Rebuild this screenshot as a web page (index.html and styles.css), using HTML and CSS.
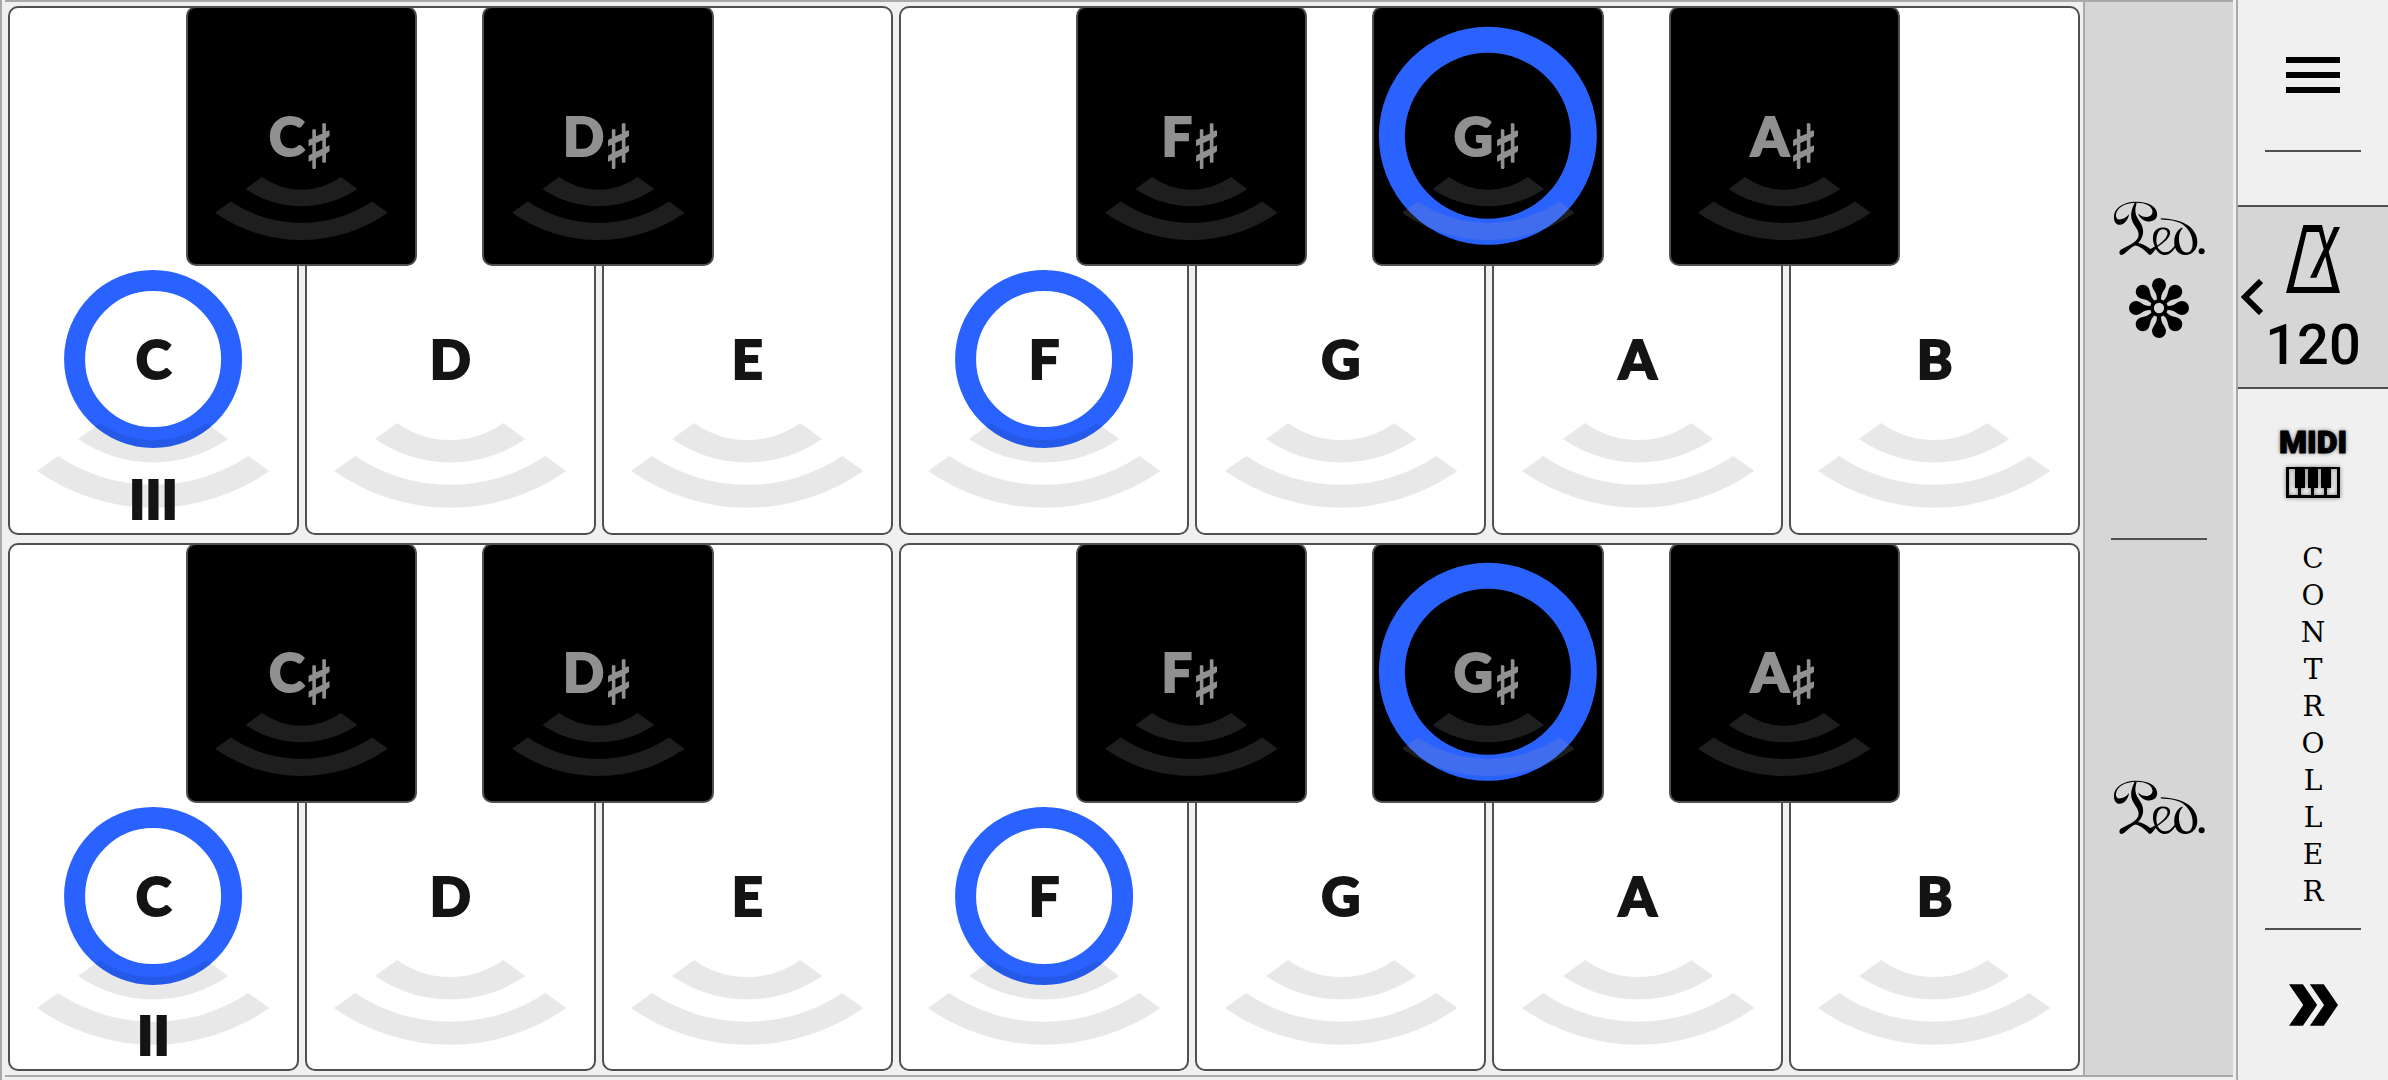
FILE: index.html
```html
<!DOCTYPE html>
<html lang="en">
<head>
<meta charset="utf-8">
<title>Keyboard Controller</title>
<link rel="stylesheet" href="styles.css">
</head>
<body>
<svg class="symbols" aria-hidden="true">
  <symbol id="waves" viewBox="-116 423 232 85">
    <path d="M-53 423A91 91 0 0 0 53 423L75 439A132 132 0 0 1 -75 439Z"/>
    <path d="M-95 456A172 172 0 0 0 95 456L116 471A202 202 0 0 1 -116 471Z"/>
  </symbol>
  <symbol id="pedal-down" viewBox="132 64 272 164">
    <path d="M177 103C176 116 165 135 149 135C137 135 132 124 132 112C132 84 161 66 199 66C236 66 261 82 261 103C261 117 251 125 238 125C222 125 208 115 204 101C213 110 224 113 234 111C243 109 248 103 247 94C245 78 225 69 199 69C163 69 140 85 138 105C137 115 142 120 150 119C162 118 172 110 177 103Z"/>
    <path d="M194 68L200 69C196 82 194 94 198 106C203 121 219 134 219 154C219 170 212 181 204 189C217 191 230 199 241 207L254 200L256 203L237 225C226 213 214 201 196 197C180 201 167 224 154 225C147 225 146 214 153 209C168 200 195 190 203 175C209 163 204 152 197 142C189 130 183 121 183 106C183 93 189 79 194 68Z"/>
    <path d="M237 222C245 214 251 206 255 201C248 188 246 170 252 157C258 146 272 141 285 144C296 146 302 154 299 164C294 180 276 192 262 201C268 211 276 218 286 217C299 216 309 204 317 192L320 195C311 210 299 225 284 225C272 225 263 217 257 207C252 213 247 220 241 225ZM261 197C275 188 291 174 292 160C292 151 282 146 273 149C260 154 256 178 261 197Z" fill-rule="evenodd"/>
    <path d="M272 115C308 117 336 123 355 138C372 151 381 168 381 187C381 209 366 225 345 225C325 225 312 209 312 186C312 166 321 150 336 143L337 146C327 155 325 171 327 188C330 206 338 219 350 218C362 217 368 204 367 187C366 164 354 147 338 134C321 123 299 120 272 119Z"/>
    <circle cx="394" cy="214" r="9"/>
  </symbol>
  <symbol id="pedal-up" viewBox="-90 -90 180 180">
    <path id="petal" d="M-7 -20C-2 -46 -21 -54 -21 -69A21 21 0 0 1 21 -69C21 -54 2 -46 7 -20Z"/>
    <use href="#petal" transform="rotate(45)"/>
    <use href="#petal" transform="rotate(90)"/>
    <use href="#petal" transform="rotate(135)"/>
    <use href="#petal" transform="rotate(180)"/>
    <use href="#petal" transform="rotate(225)"/>
    <use href="#petal" transform="rotate(270)"/>
    <use href="#petal" transform="rotate(315)"/>
    <circle r="21" fill="none" stroke="#000" stroke-width="11"/>
  </symbol>
</svg>

<div class="app">
  <main class="board">
    <div class="keyboards">
      <section class="octave" aria-label="Octave III">
        <div class="whites">
          <button class="key white"><span class="note"><i class="ring"></i>C</span><svg class="waves"><use href="#waves"/></svg><span class="number">III</span></button>
          <button class="key white"><span class="note">D</span><svg class="waves"><use href="#waves"/></svg></button>
          <button class="key white"><span class="note">E</span><svg class="waves"><use href="#waves"/></svg></button>
          <button class="key white"><span class="note"><i class="ring"></i>F</span><svg class="waves"><use href="#waves"/></svg></button>
          <button class="key white"><span class="note">G</span><svg class="waves"><use href="#waves"/></svg></button>
          <button class="key white"><span class="note">A</span><svg class="waves"><use href="#waves"/></svg></button>
          <button class="key white"><span class="note">B</span><svg class="waves"><use href="#waves"/></svg></button>
        </div>
        <div class="blacks">
          <button class="key black"><span class="note">C<span class="sharp">♯</span></span><svg class="waves"><use href="#waves"/></svg></button>
          <button class="key black"><span class="note">D<span class="sharp">♯</span></span><svg class="waves"><use href="#waves"/></svg></button>
          <button class="key black after-gap"><span class="note">F<span class="sharp">♯</span></span><svg class="waves"><use href="#waves"/></svg></button>
          <button class="key black"><span class="note"><i class="ring"></i>G<span class="sharp">♯</span></span><svg class="waves"><use href="#waves"/></svg></button>
          <button class="key black"><span class="note">A<span class="sharp">♯</span></span><svg class="waves"><use href="#waves"/></svg></button>
        </div>
      </section>
      <section class="octave" aria-label="Octave II">
        <div class="whites">
          <button class="key white"><span class="note"><i class="ring"></i>C</span><svg class="waves"><use href="#waves"/></svg><span class="number">II</span></button>
          <button class="key white"><span class="note">D</span><svg class="waves"><use href="#waves"/></svg></button>
          <button class="key white"><span class="note">E</span><svg class="waves"><use href="#waves"/></svg></button>
          <button class="key white"><span class="note"><i class="ring"></i>F</span><svg class="waves"><use href="#waves"/></svg></button>
          <button class="key white"><span class="note">G</span><svg class="waves"><use href="#waves"/></svg></button>
          <button class="key white"><span class="note">A</span><svg class="waves"><use href="#waves"/></svg></button>
          <button class="key white"><span class="note">B</span><svg class="waves"><use href="#waves"/></svg></button>
        </div>
        <div class="blacks">
          <button class="key black"><span class="note">C<span class="sharp">♯</span></span><svg class="waves"><use href="#waves"/></svg></button>
          <button class="key black"><span class="note">D<span class="sharp">♯</span></span><svg class="waves"><use href="#waves"/></svg></button>
          <button class="key black after-gap"><span class="note">F<span class="sharp">♯</span></span><svg class="waves"><use href="#waves"/></svg></button>
          <button class="key black"><span class="note"><i class="ring"></i>G<span class="sharp">♯</span></span><svg class="waves"><use href="#waves"/></svg></button>
          <button class="key black"><span class="note">A<span class="sharp">♯</span></span><svg class="waves"><use href="#waves"/></svg></button>
        </div>
      </section>
    </div>
    <div class="pedals">
      <button class="pedal" aria-label="Pedal, press and release">
        <svg class="ped"><use href="#pedal-down"/></svg>
        <svg class="release"><use href="#pedal-up"/></svg>
      </button>
      <hr class="rule">
      <button class="pedal" aria-label="Pedal">
        <svg class="ped"><use href="#pedal-down"/></svg>
      </button>
    </div>
  </main>

  <aside class="sidebar">
    <button class="menu" aria-label="Menu">
      <svg width="54" height="36" viewBox="0 0 54 36"><path d="M0 0H54V6H0ZM0 15H54V21H0ZM0 30H54V36H0Z"/></svg>
    </button>
    <hr class="rule">
    <button class="tempo" aria-label="Metronome, 120">
      <svg class="back" width="22" height="36" viewBox="0 0 22 36"><path d="M20 2L4 18L20 34" fill="none" stroke="#000" stroke-width="6"/></svg>
      <svg width="54" height="68" viewBox="0 0 162 204"><path fill-rule="evenodd" d="M52 0H108L122 58L144 6H162L128 80L162 204H0ZM62 21L23 186H138L118 94L91 158H72L113 72L99 21Z"/></svg>
      <span class="bpm">120</span>
    </button>
    <button class="midi">
      <span class="midi-name">MIDI</span>
      <svg class="midi-keys" width="54" height="31" viewBox="0 0 54 31"><path fill-rule="evenodd" d="M0 0H54V31H0ZM3 2V28H12V21H9V2ZM15 21V28H25V21H22V2H19V21ZM28 21V28H38V21H35V2H32V21ZM41 21V28H51V2H45V21Z"/></svg>
    </button>
    <button class="mode">CONTROLLER</button>
    <hr class="rule">
    <button class="next" aria-label="Next">
      <svg width="49" height="42" viewBox="0 0 148 126"><path d="M0 0H42L85 63L42 126H0L43 63ZM63 0H105L148 63L105 126H63L106 63Z"/></svg>
    </button>
  </aside>
</div>
</body>
</html>
```

FILE: styles.css
```css
* {
  box-sizing: border-box;
}

body {
  margin: 0;
  background: #f0f0f0;
  color: #000;
  font-family: Lato, "Open Sans", sans-serif;
}

button {
  margin: 0;
  padding: 0;
  border: 0;
  background: none;
  color: inherit;
  font: inherit;
  cursor: pointer;
}

svg {
  display: block;
  flex: none;
}

.symbols {
  position: absolute;
  width: 0;
  height: 0;
}

.app {
  display: flex;
  min-height: 100vh;
  border-left: 2px solid #a9a9a9;
}

.board {
  display: flex;
  flex: 1;
  margin: 0 3px;
  margin-bottom: 3px;
  border: solid #a9a9a9;
  border-width: 2px 0;
}

.keyboards {
  display: grid;
  flex: 1;
  grid-auto-rows: minmax(480px, 1fr);
  gap: 8px;
  padding: 4px 3px;
}

/* One octave: seven white keys with the black keys laid over them */
.octave {
  position: relative;
  display: grid;
}

.whites {
  display: grid;
  grid-template-columns: repeat(7, 1fr);
  gap: 6px;
}

.blacks {
  position: absolute;
  top: 0;
  left: 7%;
  right: 7.1%;
  height: 260px;
  display: grid;
  grid-template-columns: repeat(6, 1fr);
  justify-items: center;
  pointer-events: none;
}

.after-gap {
  grid-column: 4;
}

.key {
  position: relative;
  display: flex;
  flex-direction: column;
  align-items: center;
  justify-content: flex-end;
  padding-bottom: 24px;
  border: 2px solid #505050;
  border-radius: 10px;
  pointer-events: auto;
}

.white {
  gap: 34px;
  background: #fff;
  color: #141414;
}

.black {
  gap: 11px;
  width: 78%;
  background: #000;
  color: #909090;
}

.note {
  position: relative;
  display: flex;
  justify-content: center;
  width: 100%;
  font-size: 54px;
  font-weight: 900;
  line-height: 60px;
  -webkit-text-stroke: 2px;
}

.sharp {
  height: 60px;
  font-family: "DejaVu Sans", sans-serif;
  font-size: 60px;
  font-weight: 700;
  line-height: 82px;
}

.ring {
  position: absolute;
  top: 50%;
  left: 50%;
  aspect-ratio: 1;
  border: solid #2962ff;
  border-radius: 50%;
  transform: translate(-50%, -50%);
}

.white .ring {
  width: 62%;
  border-width: 21px;
}

.black .ring {
  width: 96%;
  border-width: 26px;
}

.waves {
  position: relative;
  aspect-ratio: 232 / 85;
}

.white .waves {
  width: 81%;
  fill: rgba(0, 0, 0, 0.09);
}

.black .waves {
  width: 76%;
  fill: rgba(160, 160, 160, 0.19);
}

.number {
  position: absolute;
  bottom: 4px;
  font-size: 54px;
  font-weight: 900;
  line-height: 60px;
  -webkit-text-stroke: 2px;
}

.rule {
  width: 96px;
  height: 2px;
  margin: 0;
  border: 0;
  background: #505050;
}

.pedals {
  display: flex;
  flex-direction: column;
  align-items: center;
  width: 150px;
  border-left: 2px solid #a9a9a9;
  background: #d6d6d6;
}

.pedal {
  display: flex;
  flex: 1;
  flex-direction: column;
  align-items: center;
  justify-content: center;
  gap: 22px;
  width: 100%;
}

.ped {
  width: 91px;
  height: 55px;
}

.release {
  width: 60px;
  height: 60px;
}

.sidebar {
  display: flex;
  flex-direction: column;
  align-items: center;
  width: 152px;
  border-left: 2px solid #a9a9a9;
}

.menu {
  display: grid;
  place-items: center;
  width: 100%;
  height: 150px;
}

.tempo {
  position: relative;
  display: flex;
  flex-direction: column;
  align-items: center;
  gap: 22px;
  width: 100%;
  height: 184px;
  margin: 53px 0 40px;
  padding-top: 18px;
  border: solid #505050;
  border-width: 2px 0;
  background: #d6d6d6;
}

.back {
  position: absolute;
  top: 72px;
  left: 3px;
}

.bpm {
  font-family: Roboto, sans-serif;
  font-size: 56px;
  font-weight: 500;
  line-height: 60px;
}

.midi {
  display: flex;
  flex-direction: column;
  align-items: center;
  gap: 11px;
}

.midi-name {
  font-family: Roboto, sans-serif;
  font-size: 32px;
  font-weight: 900;
  line-height: 27px;
  text-shadow: 0 0 4px #555;
  -webkit-text-stroke: 1px #000;
}

.midi-keys {
  filter: drop-shadow(0 0 2px #777);
}

/* The narrow box breaks the word after every letter */
.mode {
  width: 30px;
  margin: auto 0 18px;
  font-family: "DejaVu Serif", serif;
  font-size: 28px;
  line-height: 37px;
  text-align: center;
  word-break: break-all;
}

.next {
  display: grid;
  place-items: center;
  width: 100%;
  height: 150px;
}
```
